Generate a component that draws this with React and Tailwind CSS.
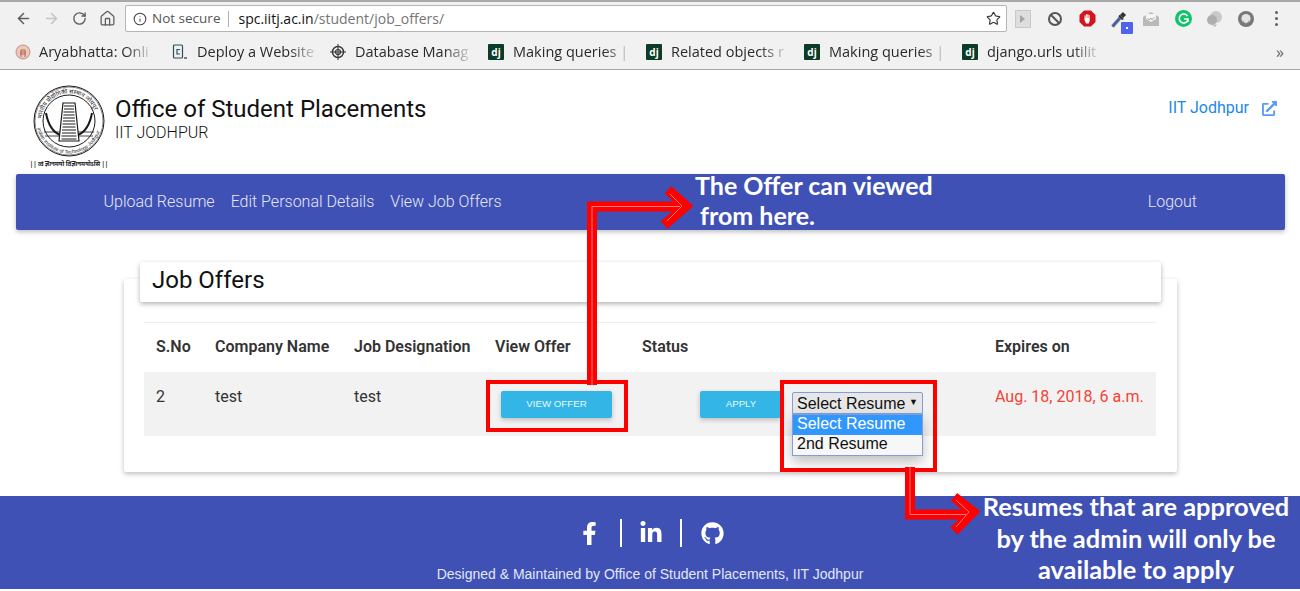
import React from "react";
import { ArrowLeft, ArrowRight, RotateCw, Home, Star, Info } from "lucide-react";
import { FaFacebookF, FaLinkedinIn, FaGithub, FaExternalLinkAlt } from "react-icons/fa";

function Dj() {
  return (
    <span className="flex h-4 w-4 shrink-0 items-center justify-center rounded-[1px] bg-[#0c3c26] font-['Open_Sans',sans-serif] text-[10px] font-bold leading-none text-white">
      dj
    </span>
  );
}

function Seal16() {
  return (
    <svg width="16" height="16" viewBox="0 0 16 16">
      <circle cx="8" cy="8" r="7" fill="#e9c9bd" stroke="#c98f80" />
      <path d="M6 13V6h4v7M5 8h6M5 10h6" stroke="#b8685a" strokeWidth="1" fill="none" />
    </svg>
  );
}

function CodeIcon() {
  return (
    <svg width="16" height="16" viewBox="0 0 16 16" fill="none">
      <rect x="1.5" y="1" width="9" height="13" rx="1" stroke="#29505e" strokeWidth="1.2" />
      <path d="M8 5.5H5v4.5h3" stroke="#29505e" strokeWidth="1.2" />
      <path d="M12 14h3" stroke="#333" strokeWidth="1.2" />
    </svg>
  );
}

function TargetIcon() {
  return (
    <svg width="16" height="16" viewBox="0 0 16 16" fill="none" stroke="#333">
      <circle cx="8" cy="8" r="5.5" strokeWidth="1.4" />
      <circle cx="8" cy="8" r="2.5" strokeWidth="1.2" />
      <path d="M8 0v16M0 8h16" strokeWidth="1" />
    </svg>
  );
}

function Bookmark({ icon, label, width = "w-[158px]", gap = "gap-[9px]" }) {
  return (
    <div className={`flex shrink-0 items-center ${gap} ${width}`}>
      {icon}
      <span className="whitespace-nowrap pr-[1px] text-[14.5px] leading-5 text-[#2a2a2a] [mask-image:linear-gradient(to_right,black_78%,rgba(0,0,0,0.15)_100%)]">
        {label}
      </span>
    </div>
  );
}

function Extensions() {
  return (
    <div className="flex items-center">
      <div className="flex w-[32px] justify-center">
        <svg width="16" height="18" viewBox="0 0 16 18">
          <rect x="0.5" y="0.5" width="15" height="17" fill="#dedede" stroke="#c9c9c9" />
          <path d="M5 5v8l5-4z" fill="#a5a5a5" />
        </svg>
      </div>
      <div className="flex w-[32px] justify-center">
        <svg width="16" height="16" viewBox="0 0 16 16" fill="none" stroke="#555" strokeWidth="2">
          <circle cx="8" cy="8" r="6" />
          <path d="M4 4l8 8" />
        </svg>
      </div>
      <div className="flex w-[32px] justify-center">
        <svg width="17" height="17" viewBox="0 0 17 17">
          <path d="M5 0.5h7l4.500 4.500v7l-4.500 4.500H5l-4.500-4.500V5z" fill="#d3151d" />
          <path d="M5.500 10V5.500h1V8h.4V4.300h1V8h.4V4.300h1V8h.4V5h1v6l-1 2.500H7z" fill="#fff" />
        </svg>
      </div>
      <div className="relative flex w-[32px] justify-center">
        <svg width="18" height="18" viewBox="0 0 18 18" fill="none">
          <path d="M2.500 16.500L10 8" stroke="#8a8a8a" strokeWidth="3.500" />
          <path d="M2.500 16.500L10 8" stroke="#3b5fa8" strokeWidth="2" />
          <path d="M9 5.500L13 9.500" stroke="#333" strokeWidth="2" />
          <path d="M11.500 6.500l3-3" stroke="#333" strokeWidth="4.500" />
        </svg>
        <span className="absolute left-[18px] top-[12px] flex h-[12px] w-[12px] items-center justify-center rounded-[1px] bg-[#4f63ee]">
          <span className="h-[2px] w-[2px] bg-white" />
        </span>
      </div>
      <div className="flex w-[32px] justify-center">
        <svg width="16" height="14" viewBox="0 0 16 14">
          <path d="M0 5l8-5 8 5v9H0z" fill="#b9b9b9" />
          <path d="M3 2h10v5l-5 3-5-3z" fill="#f4f4f4" />
          <path d="M4.500 6l1.500 2 2-2 1 2 2.500-3" stroke="#aaa" fill="none" />
        </svg>
      </div>
      <div className="flex w-[32px] justify-center">
        <svg width="17" height="17" viewBox="0 0 17 17" fill="none">
          <circle cx="8.500" cy="8.500" r="8.500" fill="#15c26b" />
          <path d="M12.500 6A4.500 4.500 0 1 0 12.500 11M9 9h4v3" stroke="#fff" strokeWidth="1.500" />
        </svg>
      </div>
      <div className="flex w-[31px] justify-center">
        <svg width="17" height="16" viewBox="0 0 17 16">
          <circle cx="10" cy="6" r="6" fill="#c9c9c9" />
          <circle cx="6" cy="9" r="5" fill="#aeaeae" />
          <path d="M6 14l3 2 2-3z" fill="#bdbdbd" />
        </svg>
      </div>
      <div className="flex w-[31px] justify-center">
        <svg width="16" height="16" viewBox="0 0 16 16">
          <circle cx="8" cy="8" r="8" fill="#777" />
          <circle cx="8" cy="7.500" r="4.600" fill="#e4e4e4" />
          <path d="M5 9a3 3 0 0 0 6 0l-3 5z" fill="#8a8a8a" />
        </svg>
      </div>
      <div className="flex w-[31px] flex-col items-center gap-[3px]">
        <span className="h-[3px] w-[3px] rounded-full bg-[#606060]" />
        <span className="h-[3px] w-[3px] rounded-full bg-[#606060]" />
        <span className="h-[3px] w-[3px] rounded-full bg-[#606060]" />
      </div>
    </div>
  );
}

function BrowserChrome() {
  return (
    <div className="h-[70px] border-b border-t-2 border-[#a9a9a9] bg-[#f1f1f1] font-['Open_Sans',sans-serif]">
      <div className="flex h-[32px] items-center pl-[15px] pt-[1px]">
        <ArrowLeft size={17} strokeWidth={2.2} className="text-[#5f5f5f]" />
        <ArrowRight size={17} strokeWidth={2.2} className="ml-[11px] text-[#c4c4c4]" />
        <RotateCw size={15} strokeWidth={2.2} className="ml-[12px] text-[#5f5f5f]" />
        <Home size={17} strokeWidth={1.8} className="ml-[12px] text-[#5f5f5f]" />
        <div className="ml-[9px] flex h-[27px] w-[882px] items-center rounded-[2px] border border-[#b5b5b5] bg-white pl-[7px] pr-[5px]">
          <Info size={14} strokeWidth={1.8} className="text-[#444]" />
          <span className="ml-[5px] text-[13.500px] text-[#555]">Not secure</span>
          <span className="ml-[8px] h-[16px] w-px bg-[#b0b0b0]" />
          <span className="ml-[9px] text-[14px]">
            <span className="text-[#111]">spc.iitj.ac.in</span>
            <span className="text-[#747474]">/student/job_offers/</span>
          </span>
          <Star size={15} strokeWidth={1.8} className="ml-auto text-[#333]" />
        </div>
        <Extensions />
      </div>
      <div className="flex h-[35px] items-center pl-[15px]">
        <Bookmark icon={<Seal16 />} label="Aryabhatta: Onli" width="w-[157px]" gap="gap-[8px]" />
        <Bookmark icon={<CodeIcon />} label="Deploy a Website" />
        <Bookmark icon={<TargetIcon />} label="Database Manag" />
        <Bookmark icon={<Dj />} label="Making queries |" />
        <Bookmark icon={<Dj />} label="Related objects r" />
        <Bookmark icon={<Dj />} label="Making queries |" />
        <Bookmark icon={<Dj />} label="django.urls utilit" />
        <span className="ml-auto mr-[16px] text-[16px] leading-5 text-[#666]">»</span>
      </div>
    </div>
  );
}

function Logo() {
  return (
    <div className="flex w-[74px] flex-col items-center">
      <svg width="72" height="72" viewBox="0 0 72 72" fill="none" stroke="#1b1b1b">
        <defs>
          <path id="sealTop" d="M8.500 36a27.500 27.500 0 0 1 55 0" />
          <path id="sealBottom" d="M3.500 36a32.500 32.500 0 0 0 65 0" />
        </defs>
        <circle cx="36" cy="36" r="35" strokeWidth="1" />
        <circle cx="36" cy="36" r="34" strokeWidth=".5" />
        <circle cx="36" cy="36" r="26" strokeWidth="1" />
        <text fontSize="6" fill="#222" stroke="none" fontFamily="'Noto Sans','Liberation Sans',sans-serif">
          <textPath href="#sealTop" startOffset="2">
            भारतीय प्रौद्योगिकी संस्थान जोधपुर
          </textPath>
        </text>
        <text fontSize="5" fill="#222" stroke="none" fontFamily="'Liberation Sans',sans-serif">
          <textPath href="#sealBottom" startOffset="7">
            Indian Institute of Technology Jodhpur
          </textPath>
        </text>
        <path d="M13 28c2 11 7 19 14 22M59 28c-2 11-7 19-14 22" strokeWidth="2" />
        <path d="M11 47h16M45 47h16M12 51h15M45 51h15" strokeWidth=".8" />
        <path d="M30 18L26 56h20L42 18z" fill="#fff" strokeWidth="1.200" />
        <path d="M31 21h10M31 24h10M30.500 27h11M30.500 30h11M30 33h12M30 36h12M29.500 39h13M29.500 42h13M29 45h14M29 48h14M28.500 51h15M28.500 54h15" strokeWidth="1.200" />
      </svg>
      <div className="mt-[3px] whitespace-nowrap font-['Noto_Sans',sans-serif] text-[6.200px] font-bold leading-[8px] tracking-[-0.1px] text-[#222]">
        || त्वं ज्ञानमयो विज्ञानमयोऽसि ||
      </div>
    </div>
  );
}

function Header() {
  return (
    <div className="flex h-[104px] items-start pl-[32px] pr-[23px] pt-[15px]">
      <Logo />
      <div className="ml-[9px] mt-[9px]">
        <div className="text-[24px] leading-[30px] text-[#111]">Office of Student Placements</div>
        <div className="text-[16px] font-light leading-[18px] text-[#111]">IIT JODHPUR</div>
      </div>
      <div className="ml-auto mt-[13px] flex items-center gap-[13px] text-[16px] leading-5 text-[#1e88e5]">
        IIT Jodhpur
        <FaExternalLinkAlt size={15} className="text-[#5a9cf2]" />
      </div>
    </div>
  );
}

function Nav() {
  return (
    <nav className="mx-4 flex h-[56px] w-[1269px] items-center rounded-[2px] bg-[#3f51b5] pl-[87.500px] pr-[88px] text-[16px] font-light text-[#e6e8f6] shadow-[0_2px_5px_rgba(0,0,0,0.26)]">
      <a className="mr-4">Upload Resume</a>
      <a className="mr-4">Edit Personal Details</a>
      <a>View Job Offers</a>
      <a className="ml-auto">Logout</a>
    </nav>
  );
}

function BlueButton({ children, className }) {
  return (
    <button className={`flex h-[27px] items-center justify-center rounded-[2px] bg-[#33b5e5] font-['Liberation_Sans',sans-serif] text-[9.700px] text-[#e9f8fd] shadow-[0_2px_5px_rgba(0,0,0,0.22)] ${className}`}>
      {children}
    </button>
  );
}

function ResumeSelect() {
  return (
    <div className="relative ml-[10px] mt-[1px] w-[131px] font-['Liberation_Sans',sans-serif] text-[16px] leading-[20px] text-[#111]">
      <div className="flex h-[22px] items-center justify-between rounded-t-[2px] border border-[#7f9fd8] bg-[#e7e7e7] pl-[4px] pr-[4px] pt-[2px]">
        Select Resume
        <span className="mb-[2px] text-[9px] leading-none">▼</span>
      </div>
      <div className="absolute left-0 top-[22px] z-10 w-[131px] border border-[#7f9fd8] bg-[#f7f7f7] shadow-[0_6px_12px_rgba(0,0,0,0.25)]">
        <div className="h-[20px] bg-[#3297fd] pl-[4px] leading-[18px] text-white">Select Resume</div>
        <div className="h-[20px] pl-[4px] leading-[18px]">2nd Resume</div>
      </div>
    </div>
  );
}

function JobTable() {
  return (
    <table className="mt-[20px] w-[1012px] table-fixed border-t border-[#eeeeee] text-left text-[16px] text-[#333]">
      <colgroup>
        <col className="w-[59px]" />
        <col className="w-[139px]" />
        <col className="w-[141px]" />
        <col className="w-[147px]" />
        <col className="w-[353px]" />
        <col className="w-[173px]" />
      </colgroup>
      <thead>
        <tr className="h-[49px]">
          <th className="pl-[12px] font-semibold">S.No</th>
          <th className="pl-[12px] font-semibold">Company Name</th>
          <th className="pl-[12px] font-semibold">Job Designation</th>
          <th className="pl-[12px] font-semibold">View Offer</th>
          <th className="pl-[12px] font-semibold">Status</th>
          <th className="pl-[12px] font-semibold">Expires on</th>
        </tr>
      </thead>
      <tbody>
        <tr className="h-[64px] bg-[#f2f2f2] align-top">
          <td className="pl-[12px] pt-[13px]">2</td>
          <td className="pl-[12px] pt-[13px]">test</td>
          <td className="pl-[12px] pt-[13px]">test</td>
          <td className="pl-[18px] pt-[19px]">
            <BlueButton className="w-[111px]">VIEW OFFER</BlueButton>
          </td>
          <td className="pl-[70px] pt-[19px]">
            <div className="flex items-start">
              <BlueButton className="w-[82px]">APPLY</BlueButton>
              <ResumeSelect />
            </div>
          </td>
          <td className="pl-[12px] pt-[13px] text-[#f44336]">Aug. 18, 2018, 6 a.m.</td>
        </tr>
      </tbody>
    </table>
  );
}

function Card() {
  return (
    <div className="relative ml-[124px] mt-[49px] h-[193px] w-[1053px] rounded-[2px] bg-white pl-[20px] pt-[23px] shadow-[0_2px_5px_rgba(0,0,0,0.26)]">
      <div className="absolute left-[16px] top-[-17px] flex h-[40px] w-[1021px] items-center rounded-[2px] bg-white pb-[4px] pl-[12px] text-[24px] text-[#111] shadow-[0_2px_5px_rgba(0,0,0,0.3)]">
        Job Offers
      </div>
      <JobTable />
    </div>
  );
}

function Footer() {
  return (
    <footer className="mt-[24px] flex h-[93px] flex-col items-center bg-[#3f51b5] text-white">
      <div className="mt-[22px] flex h-[30px] items-center pl-[2px]">
        <FaFacebookF size={23} />
        <span className="ml-[19px] h-[28px] w-[2px] bg-white" />
        <FaLinkedinIn size={24} className="ml-[17px]" />
        <span className="ml-[17px] h-[28px] w-[2px] bg-white" />
        <FaGithub size={23} className="ml-[19px]" />
      </div>
      <div className="mt-[17px] font-['Liberation_Sans',sans-serif] text-[14px] leading-[18px] text-[#e3e6f6]">
        Designed &amp; Maintained by Office of Student Placements, IIT Jodhpur
      </div>
    </footer>
  );
}

function RedBox({ className }) {
  return <div className={`absolute border-[4px] border-[#ff0000] ${className}`} />;
}

function Annotations() {
  return (
    <>
      <RedBox className="left-[486px] top-[380px] h-[52px] w-[142px]" />
      <RedBox className="left-[780px] top-[380px] h-[92px] w-[157px]" />
      <svg className="absolute left-0 top-0" width="1300" height="591" fill="none">
        <path d="M592 385V206.500H684M668 190L686 206L664 225" stroke="#ff0000" strokeWidth="10" />
        <path d="M592 385V206.500H680M670 194L682 206L667 221" stroke="#ff7777" strokeWidth="1" />
        <path d="M910 467V514.500H970M954 497L973 512L954 531" stroke="#ff0000" strokeWidth="10" />
        <path d="M910 467V514.500H966M956 500L969 512L956 527" stroke="#ff7777" strokeWidth="1" />
      </svg>
      <div className="absolute left-[695px] top-[170px] w-[260px] whitespace-nowrap font-['Lato',sans-serif] text-[25px] font-bold leading-[30px] text-white">
        <div>The Offer can viewed</div>
        <div className="pl-[5px]">from here.</div>
      </div>
      <div className="absolute left-[966px] top-[491px] w-[340px] whitespace-nowrap text-center font-['Lato',sans-serif] text-[25.400px] font-bold leading-[31.500px] text-white">
        Resumes that are approved
        <br />
        by the admin will only be
        <br />
        available to apply
      </div>
    </>
  );
}

export default function App() {
  return (
    <div className="relative h-[591px] w-[1300px] overflow-hidden bg-white font-['Roboto',sans-serif]">
      <BrowserChrome />
      <Header />
      <Nav />
      <Card />
      <Footer />
      <Annotations />
    </div>
  );
}
